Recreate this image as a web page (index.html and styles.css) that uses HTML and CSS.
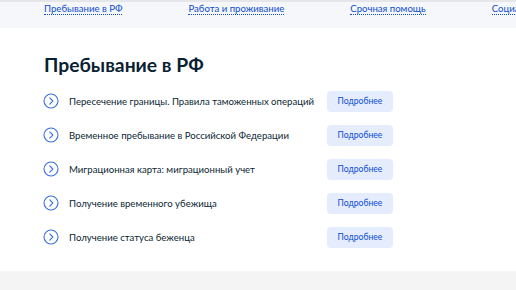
FILE: index.html
```html
<!DOCTYPE html>
<html lang="ru">
<head>
  <meta charset="UTF-8" />
  <title>Пребывание в РФ</title>
  <link rel="stylesheet" href="styles.css">
</head>
<body>

  <nav class="topnav">
    <a href="#">Пребывание в РФ</a>
    <a href="#">Работа и проживание</a>
    <a href="#">Срочная помощь</a>
    <a href="#">Социальная поддержка</a>
  </nav>

  <section class="stay">
    <h2>Пребывание в РФ</h2>

    <div class="row">
      <svg class="arrow" viewBox="0 0 16 16"><circle cx="8" cy="8" r="7" /><path d="M6.8 4.8 L9.8 8 L6.8 11.2" /></svg>
      <span class="title">Пересечение границы. Правила таможенных операций</span>
      <a class="more" href="#">Подробнее</a>
    </div>
    <div class="row">
      <svg class="arrow" viewBox="0 0 16 16"><circle cx="8" cy="8" r="7" /><path d="M6.8 4.8 L9.8 8 L6.8 11.2" /></svg>
      <span class="title">Временное пребывание в Российской Федерации</span>
      <a class="more" href="#">Подробнее</a>
    </div>
    <div class="row">
      <svg class="arrow" viewBox="0 0 16 16"><circle cx="8" cy="8" r="7" /><path d="M6.8 4.8 L9.8 8 L6.8 11.2" /></svg>
      <span class="title">Миграционная карта: миграционный учет</span>
      <a class="more" href="#">Подробнее</a>
    </div>
    <div class="row">
      <svg class="arrow" viewBox="0 0 16 16"><circle cx="8" cy="8" r="7" /><path d="M6.8 4.8 L9.8 8 L6.8 11.2" /></svg>
      <span class="title">Получение временного убежища</span>
      <a class="more" href="#">Подробнее</a>
    </div>
    <div class="row">
      <svg class="arrow" viewBox="0 0 16 16"><circle cx="8" cy="8" r="7" /><path d="M6.8 4.8 L9.8 8 L6.8 11.2" /></svg>
      <span class="title">Получение статуса беженца</span>
      <a class="more" href="#">Подробнее</a>
    </div>
  </section>

  <footer class="bottom"></footer>

</body>
</html>
```

FILE: styles.css
```css
body {
  margin: 0;
  font-family: Lato, "Noto Sans", sans-serif;
  color: #0b1f33;
  background: #fff;
  overflow: hidden;
}

.topnav {
  display: flex;
  gap: 66px;
  height: 26px;
  padding-left: 44px;
  background: #f5f7fa;
  border-top: 2px solid #e4e6ea;
  white-space: nowrap;
  overflow: hidden;
}

.topnav a {
  flex-shrink: 0;
  align-self: flex-start;
  font-size: 9.6px;
  line-height: 11px;
  padding-top: 1px;
  color: #0d4cd3;
  text-decoration: none;
  border-bottom: 1px dotted #0d4cd3;
}

.stay {
  padding: 25px 0 13px 44px;
  height: 205px;
}

.stay h2 {
  margin: 0 0 7px;
  font-size: 19.3px;
  line-height: 24px;
  font-weight: 700;
}

.row {
  display: flex;
  align-items: center;
  height: 34px;
}

.arrow {
  flex-shrink: 0;
  width: 16px;
  height: 16px;
  margin-left: -1px;
  fill: none;
  stroke: #3a6fe0;
  stroke-width: 1.1;
  stroke-linecap: round;
  stroke-linejoin: round;
}

.title {
  flex-shrink: 0;
  width: 258px;
  margin-left: 10px;
  font-size: 9.6px;
  white-space: nowrap;
}

.more {
  flex-shrink: 0;
  width: 66px;
  height: 21px;
  line-height: 21px;
  text-align: center;
  font-size: 8.6px;
  color: #0d4cd3;
  background: #e4ecfd;
  border-radius: 4px;
  text-decoration: none;
}

.bottom {
  height: 20px;
  background: #f4f4f4;
}
```
